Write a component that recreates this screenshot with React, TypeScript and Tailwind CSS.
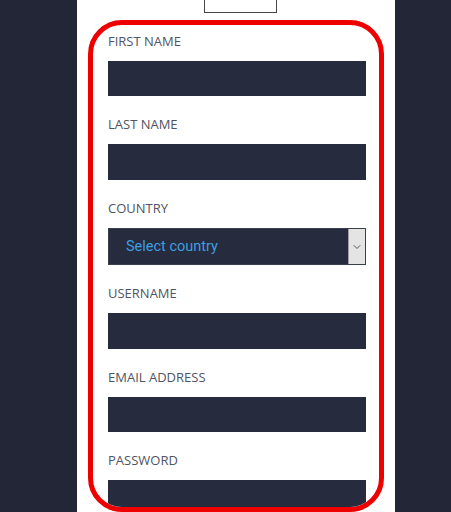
import { ChevronDown } from 'lucide-react'

const fields = [
  { label: 'FIRST NAME', h: 'h-[35px]' },
  { label: 'LAST NAME', h: 'h-[36px]' },
  { label: 'COUNTRY', h: 'h-[37px]' },
  { label: 'USERNAME', h: 'h-[36px]' },
  { label: 'EMAIL ADDRESS', h: 'h-[35px]' },
  { label: 'PASSWORD', h: 'h-[36px]' },
]

export default function App() {
  return (
    <div className="h-[512px] w-[451px] overflow-hidden bg-[#222636] pl-[77px]">
      <div className="flex h-full w-[318px] flex-col bg-white">
        {/* top button, cut off */}
        <div className="ml-[127px] h-[13px] w-[73px] border border-t-0 border-[#444] bg-white" />

        {/* highlighted form */}
        <div className="ml-[11px] mt-[7px] h-[492px] w-[296px] overflow-hidden rounded-[34px] border-[5px] border-[#ee0000] pl-[15px] pt-[8px]">
          {fields.map((f) => (
            <div key={f.label} className="mb-[20px]">
              <div
                className="mb-[12px] h-[16px] text-[13px] leading-[16px] text-[#4f5463]"
                style={{ fontFamily: '"Open Sans", sans-serif' }}
              >
                {f.label}
              </div>
              {f.label === 'COUNTRY' ? (
                <div className={`flex ${f.h} w-[258px] border border-[#3a3f4c] bg-[#262b3e]`}>
                  <div
                    className="flex flex-1 items-center pl-[17px] text-[14.5px] text-[#3d9fe0]"
                    style={{ fontFamily: 'Roboto, sans-serif' }}
                  >
                    Select country
                  </div>
                  <div className="flex w-[17px] items-center justify-center border-l border-[#a0a0a0] bg-[#e4e4e4]">
                    <ChevronDown size={12} strokeWidth={1.75} className="text-[#444]" />
                  </div>
                </div>
              ) : (
                <div className={`${f.h} w-[258px] bg-[#262b3e]`} />
              )}
            </div>
          ))}
        </div>
      </div>
    </div>
  )
}
